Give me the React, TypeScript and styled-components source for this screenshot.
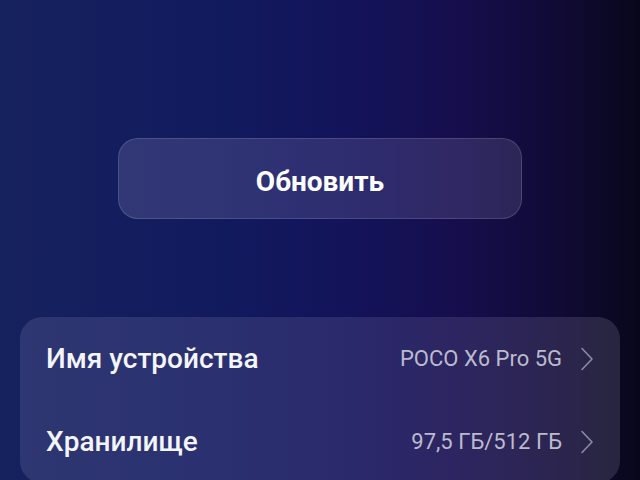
import React from 'react'
import styled, { createGlobalStyle } from 'styled-components'

const GlobalStyle = createGlobalStyle`
  html, body {
    margin: 0;
    padding: 0;
    height: 100%;
    overflow: hidden;
  }

  body {
    font-family: Roboto, 'Noto Sans', sans-serif;
  }
`

const Screen = styled.main`
  display: flex;
  flex-direction: column;
  align-items: center;
  width: 640px;
  height: 480px;
  box-sizing: border-box;
  padding-top: 138px;
  overflow: hidden;
  background: linear-gradient(
    90deg,
    #16225e 0%,
    #121a5e 35%,
    #13135a 55%,
    #160e4c 72%,
    #100a34 88%,
    #08071a 100%
  );
`

const UpdateButton = styled.button`
  flex-shrink: 0;
  box-sizing: border-box;
  width: 404px;
  height: 81px;
  border-radius: 20px;
  border: 1px solid rgba(255, 255, 255, 0.14);
  background: linear-gradient(90deg, rgba(220, 210, 255, 0.15), rgba(220, 210, 255, 0.13));
  color: #fff;
  font-family: Roboto, sans-serif;
  font-weight: 700;
  font-size: 28px;
  padding: 6px 0 0;
  cursor: pointer;
`

const Card = styled.section`
  flex-shrink: 0;
  display: flex;
  flex-direction: column;
  align-self: stretch;
  margin: 98px 20px 0;
  border-radius: 22px;
  background: linear-gradient(
    90deg,
    rgba(210, 200, 240, 0.13),
    rgba(210, 200, 240, 0.12) 70%,
    rgba(220, 215, 240, 0.14)
  );
  padding: 0 26px;
`

const Row = styled.div`
  display: flex;
  align-items: center;
  justify-content: space-between;
  height: 83px;
`

const Label = styled.span`
  color: #f4f4fb;
  font-size: 28px;
  font-weight: 500;
`

const Value = styled.span`
  display: flex;
  align-items: center;
  gap: 18px;
  color: #bcbbce;
  font-size: 22px;
`

const Chevron = () => (
  <svg width="14" height="24" viewBox="0 0 14 24" fill="none">
    <path d="M2 1.5 L12 12 L2 22.5" stroke="#8d8aa6" strokeWidth="1.6" strokeLinecap="round" strokeLinejoin="round" />
  </svg>
)

const items = [
  { label: 'Имя устройства', value: 'POCO X6 Pro 5G' },
  { label: 'Хранилище', value: '97,5 ГБ/512 ГБ' },
]

export default function App() {
  return (
    <>
      <GlobalStyle />
      <Screen>
        <UpdateButton>Обновить</UpdateButton>
        <Card>
          {items.map(item => (
            <Row key={item.label}>
              <Label>{item.label}</Label>
              <Value>
                {item.value}
                <Chevron />
              </Value>
            </Row>
          ))}
        </Card>
      </Screen>
    </>
  )
}
